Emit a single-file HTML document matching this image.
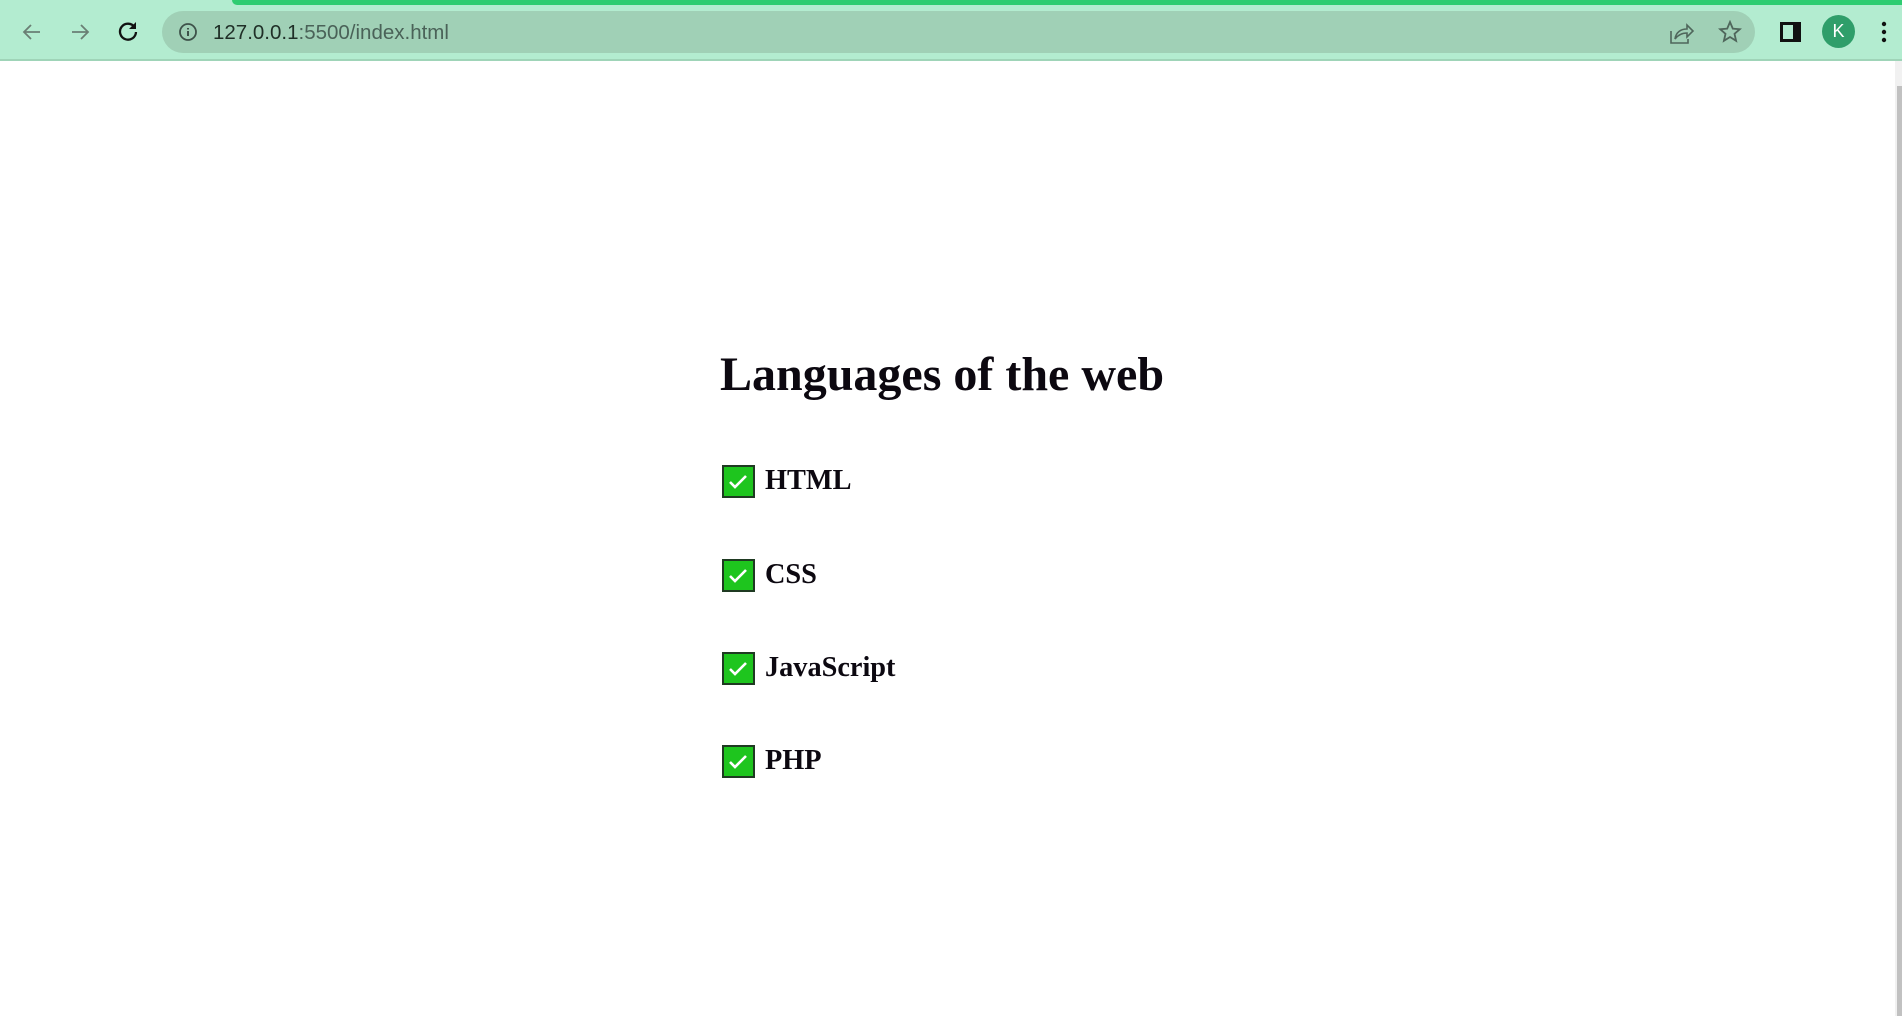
<!DOCTYPE html>
<html><head><meta charset="utf-8"><style>
*{margin:0;padding:0;box-sizing:border-box}
body{width:1902px;height:1016px;overflow:hidden;background:#fff;position:relative;font-family:"Liberation Serif",serif}
.tb{position:absolute;left:0;top:0;width:1902px;height:61px;background:#b3ecd0;border-bottom:2px solid #9fd4b8}
.strip{position:absolute;left:232px;top:0;right:0;height:5px;background:#2ecc71;border-bottom-left-radius:6px}
.addr{position:absolute;left:162px;top:11px;width:1593px;height:42px;border-radius:21px;background:#a0d0b6}
.url{position:absolute;left:213px;top:21px;font:20.5px "Liberation Sans",sans-serif;color:#1f2f27}
.url span{color:#4a6258}
.ic{position:absolute}
h1{position:absolute;left:720px;top:345px;font-size:48px;font-weight:bold;color:#0c0810;white-space:nowrap;line-height:60px}
.row{position:absolute;left:722px;height:33px}
.box{position:absolute;left:0;top:0;width:33px;height:33px;background:#1ec51e;border:2px solid #1f3a22}
.lbl{position:absolute;left:43px;top:-4px;font-size:28.3px;font-weight:bold;color:#0c0810;white-space:nowrap;line-height:40px}
.sb{position:absolute;right:0;top:61px;width:7px;height:955px;background:#f1f1f1}
.th{position:absolute;right:0;top:86px;width:5px;height:930px;background:#c1c1c1}
</style></head><body>
<div class="tb"></div><div class="strip"></div>
<svg class="ic" style="left:20px;top:20px" width="24" height="24" viewBox="0 0 24 24"><path d="M20 12H5M11 5l-7 7 7 7" fill="none" stroke="#6a7f74" stroke-width="1.8"/></svg>
<svg class="ic" style="left:68px;top:20px" width="24" height="24" viewBox="0 0 24 24"><path d="M4 12h15M13 5l7 7-7 7" fill="none" stroke="#6a7f74" stroke-width="1.8"/></svg>
<svg class="ic" style="left:116px;top:19px" width="24" height="24" viewBox="0 0 24 24"><path d="M18.5 8A8 8 0 1 0 20 13" fill="none" stroke="#111" stroke-width="2.3"/><path d="M20 3v7h-7z" fill="#111"/></svg>
<div class="addr"></div>
<svg class="ic" style="left:178px;top:22px" width="20" height="20" viewBox="0 0 20 20"><circle cx="10" cy="10" r="8" fill="none" stroke="#3e524a" stroke-width="1.8"/><path d="M10 9v5M10 6v1.5" stroke="#3e524a" stroke-width="2"/></svg>
<div class="url">127.0.0.1<span>:5500/index.html</span></div>
<svg class="ic" style="left:1669px;top:21px" width="26" height="24" viewBox="0 0 26 24"><path d="M2 10v12h17v-4M6 18c1-7 6-10 12-10V4l6 6-6 6v-4c-5 0-9 2-12 6z" fill="none" stroke="#4f665b" stroke-width="1.6"/></svg>
<svg class="ic" style="left:1718px;top:20px" width="24" height="24" viewBox="0 0 24 24"><path d="M12 2l2.8 6.6 7 .6-5.3 4.6 1.6 7L12 17l-6.1 3.8 1.6-7L2.2 9.2l7-.6z" fill="none" stroke="#4f665b" stroke-width="1.8"/></svg>
<div class="ic" style="left:1780px;top:22px;width:21px;height:20px;border:3px solid #111;border-right-width:8px"></div>
<div class="ic" style="left:1822px;top:15px;width:33px;height:33px;border-radius:50%;background:#2f9e6a;color:#fff;font:18px 'Liberation Sans',sans-serif;text-align:center;line-height:33px">K</div>
<svg class="ic" style="left:1880px;top:21px" width="8" height="22" viewBox="0 0 8 22"><circle cx="4" cy="3" r="2.2" fill="#111"/><circle cx="4" cy="11" r="2.2" fill="#111"/><circle cx="4" cy="19" r="2.2" fill="#111"/></svg>
<div class="sb"></div><div class="th"></div>
<h1>Languages of the web</h1>
<div class="row" style="top:465px"><div class="box"><svg width="29" height="29" viewBox="0 0 29 29"><path d="M6 15l5 5 11-11" fill="none" stroke="#fff" stroke-width="2.6"/></svg></div><div class="lbl">HTML</div></div>
<div class="row" style="top:559px"><div class="box"><svg width="29" height="29" viewBox="0 0 29 29"><path d="M6 15l5 5 11-11" fill="none" stroke="#fff" stroke-width="2.6"/></svg></div><div class="lbl">CSS</div></div>
<div class="row" style="top:652px"><div class="box"><svg width="29" height="29" viewBox="0 0 29 29"><path d="M6 15l5 5 11-11" fill="none" stroke="#fff" stroke-width="2.6"/></svg></div><div class="lbl">JavaScript</div></div>
<div class="row" style="top:745px"><div class="box"><svg width="29" height="29" viewBox="0 0 29 29"><path d="M6 15l5 5 11-11" fill="none" stroke="#fff" stroke-width="2.6"/></svg></div><div class="lbl">PHP</div></div>
</body></html>
